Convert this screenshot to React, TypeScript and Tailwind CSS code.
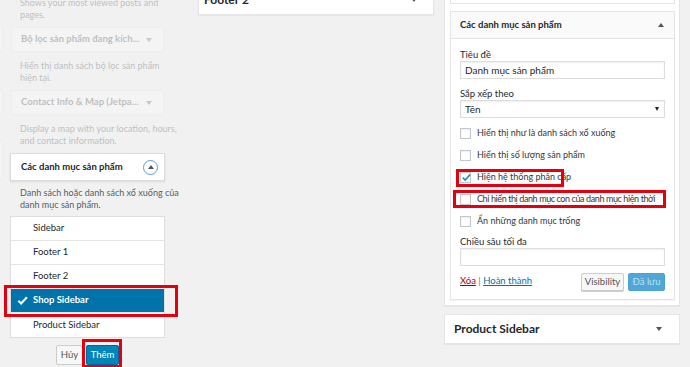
const font = { fontFamily: 'Lato, "Open Sans", sans-serif' };

function Caret({ up = false, className = "" }: { up?: boolean; className?: string }) {
  return (
    <span
      className={`inline-block h-0 w-0 border-x-[3px] border-x-transparent ${
        up ? "border-b-[4px] border-b-[#555]" : "border-t-[4px] border-t-[#555]"
      } ${className}`}
    />
  );
}

function Checkbox({ checked = false }: { checked?: boolean }) {
  return (
    <span className="relative flex h-[11px] w-[11px] shrink-0 items-center justify-center border border-[#c3c7cb] bg-white shadow-[inset_0_1px_2px_rgba(0,0,0,0.08)]">
      {checked && (
        <svg viewBox="0 0 12 12" className="absolute -top-[1px] left-0 h-[11px] w-[11px]">
          <path d="M2 6.2l2.6 2.6L10 2.8" fill="none" stroke="#1e8cbe" strokeWidth="1.8" />
        </svg>
      )}
    </span>
  );
}

function FadedWidget({ title, desc }: { title: string; desc: string[] }) {
  return (
    <div className="opacity-25">
      <div className="flex h-[25px] items-center justify-between whitespace-nowrap border border-[#e5e5e5] bg-white pl-[9px] pr-[11px] text-[9.5px] font-bold text-[#23282d]">
        <span>{title}</span>
        <Caret />
      </div>
      <div className="mt-[8px] whitespace-nowrap pl-[9px] text-[9px] leading-[12px] text-[#23282d]">
        {desc.map((d) => (
          <div key={d}>{d}</div>
        ))}
      </div>
    </div>
  );
}

const areas = ["Sidebar", "Footer 1", "Footer 2", "Shop Sidebar", "Product Sidebar"];

const options: { label: string; checked?: boolean; mark?: "small" | "wide" }[] = [
  { label: "Hiển thị như là danh sách xổ xuống" },
  { label: "Hiển thị số lượng sản phẩm" },
  { label: "Hiện hệ thống phân cấp", checked: true, mark: "small" },
  { label: "Chỉ hiển thị danh mục con của danh mục hiện thời", mark: "wide" },
  { label: "Ẩn những danh mục trống" },
];

export default function App() {
  return (
    <div className="flex h-[367px] w-[690px] overflow-hidden bg-[#f1f1f1] text-[#23282d]" style={font}>
      {/* left: available widgets */}
      <div className="relative w-[180px] shrink-0">
        <div className="pointer-events-none absolute -left-[20px] top-[27px] h-[25px] w-[23px] border border-[#e5e5e5] bg-white opacity-25" />
        <div className="pointer-events-none absolute -left-[20px] top-[90px] h-[25px] w-[23px] border border-[#e5e5e5] bg-white opacity-25" />
        <div className="pointer-events-none absolute -left-[20px] top-[140px] h-[40px] w-[23px] border border-[#e5e5e5] bg-white opacity-25" />

        <div className="ml-[11px] w-[153px]">
          <div className="-mt-[3px] whitespace-nowrap pl-[9px] text-[9px] leading-[11.5px] opacity-25">
            <div>Shows your most viewed posts and</div>
            <div>pages.</div>
          </div>
          <div className="mt-[7px]">
            <FadedWidget
              title="Bộ lọc sản phẩm đang kích..."
              desc={["Hiển thị danh sách bộ lọc sản phẩm", "hiện tại."]}
            />
          </div>
          <div className="mt-[6px]">
            <FadedWidget
              title="Contact Info & Map (Jetpa..."
              desc={["Display a map with your location, hours,", "and contact information."]}
            />
          </div>
        </div>

        <div className="ml-[10px] mt-[6px] w-[155px]">
          <div className="flex h-[28px] items-center justify-between border border-[#dcdcdc] bg-white pl-[10px] pr-[6px] shadow-[0_1px_2px_rgba(0,0,0,0.1)]">
            <span className="whitespace-nowrap text-[9.5px] font-bold">Các danh mục sản phẩm</span>
            <span className="flex h-[15px] w-[15px] items-center justify-center rounded-full border border-[#5b9dd9]">
              <Caret up className="-mt-[1px]" />
            </span>
          </div>
          <div className="mt-[6px] whitespace-nowrap pl-[10px] text-[9px] leading-[12px] text-[#555d66]">
            <div>Danh sách hoặc danh sách xổ xuống của</div>
            <div>danh mục sản phẩm.</div>
          </div>

          <div className="mt-[5px] border border-[#dddddd] bg-white">
            {areas.map((a, i) => {
              const active = a === "Shop Sidebar";
              return (
                <div
                  key={a}
                  className={`relative flex h-[24px] items-center pl-[22px] text-[9.5px] ${
                    i < areas.length - 1 ? "border-b border-[#e5e5e5]" : ""
                  } ${active ? "bg-[#0073aa] text-white" : ""}`}
                >
                  {active && (
                    <>
                      <svg viewBox="0 0 12 12" className="absolute left-[6px] top-[6px] h-[11px] w-[11px]">
                        <path d="M1.5 6.3l3 3L10.8 2.5" fill="none" stroke="white" strokeWidth="2.2" />
                      </svg>
                      <span className="pointer-events-none absolute -bottom-[5px] -left-[7px] -right-[14px] -top-[4px] border-[3px] border-[#e3000f]" />
                    </>
                  )}
                  <span className={active ? "font-bold" : ""}>{a}</span>
                </div>
              );
            })}
          </div>

          <div className="mt-[7px] flex items-start justify-center gap-[3px]">
            <button className="h-[20px] w-[27px] rounded-[2px] border border-[#cccccc] bg-[#f7f7f7] text-[9.5px] text-[#555]">
              Hủy
            </button>
            <div className="relative flex">
              <button className="h-[20px] w-[33px] rounded-[2px] border border-[#006799] bg-[#0085ba] text-[9.5px] text-white">
                Thêm
              </button>
              <span className="pointer-events-none absolute -bottom-[3px] -left-[4px] -right-[3px] -top-[6px] border-[3px] border-[#e3000f]" />
            </div>
          </div>
        </div>
      </div>

      {/* middle: Footer 2 sidebar */}
      <div className="ml-[18px] w-[236px] shrink-0">
        <div className="-mt-[15px] flex h-[30px] items-center justify-between border border-[#e5e5e5] bg-white pl-[5px] pr-[16px] shadow-[0_1px_1px_rgba(0,0,0,0.04)]">
          <span className="text-[12px] font-bold">Footer 2</span>
          <Caret />
        </div>
      </div>

      {/* right: Shop Sidebar */}
      <div className="ml-[10px] w-[236px] shrink-0">
        <div className="-mt-[10px] border border-[#e5e5e5] bg-white pb-[5px] pl-[5px] pr-[4px] shadow-[0_1px_1px_rgba(0,0,0,0.04)]">
          <div className="h-[13px] border-x border-b border-[#e5e5e5]" />
          <div className="mt-[7px] border border-[#e5e5e5] shadow-[0_1px_1px_rgba(0,0,0,0.04)]">
            <div className="flex h-[27px] items-center justify-between border-b border-[#e5e5e5] bg-[#fafafa] pl-[9px] pr-[10px]">
              <span className="text-[9.5px] font-bold">Các danh mục sản phẩm</span>
              <Caret up />
            </div>
            <div className="px-[9px] pb-[8px] pt-[10px] text-[9.5px]">
              <div className="leading-[12px]">Tiêu đề</div>
              <div className="flex h-[18px] items-center border border-[#ddd] px-[4px] text-[10px] shadow-[inset_0_1px_2px_rgba(0,0,0,0.07)]">
                Danh mục sản phẩm
              </div>
              <div className="mt-[9px] leading-[12px]">Sắp xếp theo</div>
              <div className="flex h-[18px] items-center justify-between border border-[#ddd] pl-[4px] pr-[5px] text-[10px] shadow-[inset_0_1px_2px_rgba(0,0,0,0.07)]">
                <span>Tên</span>
                <span className="inline-block h-0 w-0 border-x-[2.5px] border-t-[4px] border-x-transparent border-t-[#222]" />
              </div>
              <div className="mt-[4px] flex flex-col">
                {options.map((o) => (
                  <div key={o.label} className="relative flex h-[22px] items-center gap-[6px] whitespace-nowrap text-[9px] text-[#32373c]">
                    <Checkbox checked={o.checked} />
                    <span className={o.mark === "wide" ? "tracking-[-0.4px]" : ""}>{o.label}</span>
                    {o.mark === "small" && (
                      <span className="pointer-events-none absolute -left-[4px] bottom-[1px] top-[3px] w-[108px] border-[3px] border-[#e3000f]" />
                    )}
                    {o.mark === "wide" && (
                      <span className="pointer-events-none absolute -left-[7px] -right-[1px] bottom-[2px] top-[2px] border-[3px] border-[#e3000f]" />
                    )}
                  </div>
                ))}
              </div>
              <div className="mt-[4px] leading-[12px]">Chiều sâu tối đa</div>
              <div className="h-[18px] border border-[#ddd] shadow-[inset_0_1px_2px_rgba(0,0,0,0.07)]" />
              <div className="mt-[7px] flex items-start justify-between">
                <div className="mt-[1px] text-[9.5px]">
                  <a className="text-[#a00] underline">Xóa</a>
                  <span className="text-[#72777c]"> | </span>
                  <a className="text-[#0073aa] underline">Hoàn thành</a>
                </div>
                <div className="flex gap-[4px]">
                  <button className="h-[18px] w-[43px] rounded-[2px] border border-[#cccccc] bg-[#f7f7f7] text-[9.5px] text-[#555] shadow-[0_1px_0_#ccc]">
                    Visibility
                  </button>
                  <button className="h-[18px] w-[37px] rounded-[2px] border border-[#4aa3d2] bg-[#4ea7d6] text-[9.5px] text-[#bfe0f1]">
                    Đã lưu
                  </button>
                </div>
              </div>
            </div>
          </div>
        </div>

        <div className="mt-[8px] flex h-[30px] items-center justify-between border border-[#e5e5e5] bg-white pl-[9px] pr-[17px] shadow-[0_1px_1px_rgba(0,0,0,0.04)]">
          <span className="text-[12px] font-bold">Product Sidebar</span>
          <Caret />
        </div>
      </div>
    </div>
  );
}
